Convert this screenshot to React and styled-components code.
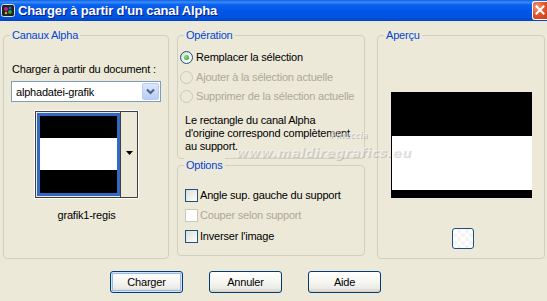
import React from "react";
import styled, { createGlobalStyle } from "styled-components";

const Global = createGlobalStyle`
  html, body { margin: 0; padding: 0; background: #ECE9D8; }
  body { font-family: "Liberation Sans", Arial, sans-serif; font-size: 11px; color: #000; letter-spacing: -0.2px; }
  * { box-sizing: border-box; }
`;

const Window = styled.div`
  position: relative;
  width: 547px;
  height: 301px;
  background: #ECE9D8;
  overflow: hidden;
  display: flex;
  flex-direction: column;
`;

const TitleBar = styled.div`
  height: 21px;
  flex: none;
  display: flex;
  align-items: center;
  background: linear-gradient(to bottom, #0A5FEA 0%, #3D8DF5 10%, #0B63F0 22%, #0056E6 50%, #0053E0 80%, #0046C8 100%);
  color: #fff;
  padding-left: 1px;
`;

const TitleText = styled.span`
  font-family: "Liberation Sans", Arial, sans-serif;
  font-weight: bold;
  font-size: 13px;
  margin-left: 2px;
  text-shadow: 1px 1px 0 #0A1E8A;
  letter-spacing: -0.15px;
  flex: 1;
`;

const CloseBtn = styled.div`
  width: 15px;
  height: 19px;
  margin-top: -1px;
  background: radial-gradient(circle at 30% 30%, #F0A080 0%, #E2582E 45%, #C8401E 100%);
  border: 1px solid #fff;
  border-right: none;
  border-radius: 3px 0 0 3px;
  display: flex;
  align-items: center;
  justify-content: center;
`;

const Body = styled.div`
  flex: 1;
  display: flex;
  flex-direction: column;
  padding: 14px 0 0 3px;
`;

const Panels = styled.div`
  display: flex;
  align-items: flex-start;
`;

const Column = styled.div`
  display: flex;
  flex-direction: column;
  gap: 6px;
  margin-left: ${(p) => p.$ml || 0}px;
`;

const Group = styled.div`
  position: relative;
  width: ${(p) => p.$w}px;
  height: ${(p) => p.$h}px;
  border: 1px solid #D0D0BF;
  border-radius: 4px;
  margin-left: ${(p) => p.$ml || 0}px;
  display: flex;
  flex-direction: column;
  padding: ${(p) => p.$pad || "0"};
`;

const Legend = styled.span`
  position: absolute;
  top: -8px;
  left: 6px;
  padding: 0 2px;
  background: #ECE9D8;
  color: #0046D5;
  font-size: 11px;
  line-height: 14px;
`;

const Label = styled.div`
  line-height: 13px;
  white-space: nowrap;
  color: ${(p) => (p.$disabled ? "#ACA899" : "#000")};
`;

const Select = styled.div`
  width: 150px;
  height: 21px;
  margin: 5px 0 0 -1px;
  border: 1px solid #7F9DB9;
  background: #fff;
  display: flex;
  align-items: center;
  padding-left: 4px;
`;

const SelectText = styled.span`
  flex: 1;
`;

const SelectBtn = styled.div`
  width: 17px;
  height: 17px;
  margin-right: 1px;
  border-radius: 2px;
  background: linear-gradient(to bottom, #DCE7FD, #B9CDF8);
  border: 1px solid #B8CBF4;
  display: flex;
  align-items: center;
  justify-content: center;
`;

const Picker = styled.div`
  align-self: center;
  margin: 9px 7px 0 0;
  width: 103px;
  height: 87px;
  border: 1px solid #404040;
  box-shadow: 0 0 0 1px #fff;
  display: flex;
  background: #ECE9D8;
`;

const Thumb = styled.div`
  width: 83px;
  margin: 1px 0 1px 1px;
  border: 3px solid #316AC5;
  display: flex;
  flex-direction: column;
`;

const Band = styled.div`
  height: ${(p) => p.$h}px;
  background: ${(p) => p.$c};
  flex: ${(p) => (p.$grow ? 1 : "none")};
`;

const PickArrow = styled.div`
  flex: 1;
  border-left: 1px solid #404040;
  display: flex;
  align-items: center;
  justify-content: center;
  padding-bottom: 4px;
`;

const Caption = styled.div`
  align-self: center;
  margin: 11px 7px 0 0;
  line-height: 13px;
`;

const RadioRow = styled.div`
  display: flex;
  align-items: center;
  height: 19.5px;
  gap: 3px;
`;

const Radio = styled.span`
  width: 13px;
  height: 13px;
  border-radius: 50%;
  border: 1px solid ${(p) => (p.$disabled ? "#CAC8BB" : "#1C5180")};
  background: ${(p) => (p.$disabled ? "#ECE9D8" : "linear-gradient(135deg, #DCDCD7, #fff)")};
  display: flex;
  align-items: center;
  justify-content: center;
  flex: none;
`;

const Dot = styled.span`
  width: 5px;
  height: 5px;
  border-radius: 50%;
  background: radial-gradient(circle at 35% 35%, #8BE08B, #21A121);
`;

const Para = styled.div`
  margin: 7px 0 0 5px;
  line-height: 13px;
`;

const CheckRow = styled.div`
  display: flex;
  align-items: center;
  height: 20.5px;
  gap: 2px;
`;

const Check = styled.span`
  width: 13px;
  height: 13px;
  border: 1px solid ${(p) => (p.$disabled ? "#CAC8BB" : "#1C5180")};
  background: ${(p) => (p.$disabled ? "#fff" : "linear-gradient(135deg, #DCDCD7, #fff)")};
  flex: none;
`;

const Preview = styled.div`
  align-self: center;
  margin: 56px 0 0 1px;
  width: 141px;
  height: 106px;
  display: flex;
  flex-direction: column;
  background: #000;
`;

const PreviewWhite = styled.div`
  height: 54px;
  margin-top: 44px;
  margin-left: 1px;
  background: #fff;
`;

const SmallBtn = styled.div`
  align-self: center;
  margin: 30px 0 0 3px;
  width: 22px;
  height: 21px;
  border: 1px solid #1C4F86;
  border-radius: 3px;
  background: repeating-conic-gradient(#F4F4F2 0% 25%, #FFFFFF 0% 50%) 0 0 / 8px 8px;
`;

const ButtonRow = styled.div`
  display: flex;
  gap: 26px;
  padding-left: 107px;
  margin-top: 12px;
`;

const Button = styled.div`
  width: 73px;
  height: 22px;
  border: 1px solid #003C74;
  border-radius: 3px;
  background: linear-gradient(to bottom, #FFFFFF 0%, #F5F5F1 50%, #ECEBE6 80%, #D6D0C5 100%);
  display: flex;
  align-items: center;
  justify-content: center;
  box-shadow: ${(p) => (p.$default ? "inset 0 0 0 1px #CEE7FF, inset 0 0 0 2px #98B8EA" : "none")};
  font-size: 11px;
`;

const Watermark = styled.div`
  position: absolute;
  left: ${(p) => p.$x}px;
  top: ${(p) => p.$y}px;
  font-family: "DejaVu Sans", sans-serif;
  font-weight: bold;
  font-style: italic;
  font-size: ${(p) => p.$s}px;
  color: rgba(250, 250, 248, 0.5);
  text-shadow: 1px 1px 0 rgba(110, 110, 110, 0.3);
  letter-spacing: ${(p) => p.$ls || 0}px;
  pointer-events: none;
  white-space: nowrap;
`;

const AppIcon = () => (
  <svg width="15" height="15" viewBox="0 0 15 15">
    <rect x="0.5" y="1.5" width="13" height="12" rx="2" fill="#222" stroke="#ddd" />
    <circle cx="5" cy="6" r="2" fill="#C02090" />
    <circle cx="9" cy="9" r="2" fill="#20A040" />
    <circle cx="9" cy="5" r="1.5" fill="#2060D0" />
    <circle cx="5" cy="10" r="1.2" fill="#E0C020" />
  </svg>
);

export default function App() {
  return (
    <>
      <Global />
      <Window>
        <TitleBar>
          <AppIcon />
          <TitleText>Charger à partir d'un canal Alpha</TitleText>
          <CloseBtn>
            <svg width="10" height="10" viewBox="0 0 10 10">
              <path d="M1.5 1.5 L8.5 8.5 M8.5 1.5 L1.5 8.5" stroke="#fff" strokeWidth="2" strokeLinecap="square" />
            </svg>
          </CloseBtn>
        </TitleBar>
        <Body>
          <Panels>
            <Group $w={166} $h={224} $pad="27px 0 0 8px">
              <Legend>Canaux Alpha</Legend>
              <Label>Charger à partir du document :</Label>
              <Select>
                <SelectText>alphadatei-grafik</SelectText>
                <SelectBtn>
                  <svg width="9" height="7" viewBox="0 0 9 7">
                    <path d="M1 1.5 L4.5 5 L8 1.5" fill="none" stroke="#4D6185" strokeWidth="2" />
                  </svg>
                </SelectBtn>
              </Select>
              <Picker>
                <Thumb>
                  <Band $c="#000" $h={22} />
                  <Band $c="#fff" $h={32} />
                  <Band $c="#000" $grow />
                </Thumb>
                <PickArrow>
                  <svg width="7" height="4" viewBox="0 0 7 4">
                    <path d="M0 0 H7 L3.5 4 Z" fill="#000" />
                  </svg>
                </PickArrow>
              </Picker>
              <Caption>grafik1-regis</Caption>
            </Group>
            <Column $ml={8}>
              <Group $w={188} $h={124} $pad="12px 0 0 2px">
                <Legend>Opération</Legend>
                <RadioRow>
                  <Radio><Dot /></Radio>
                  <Label>Remplacer la sélection</Label>
                </RadioRow>
                <RadioRow>
                  <Radio $disabled />
                  <Label $disabled>Ajouter à la sélection actuelle</Label>
                </RadioRow>
                <RadioRow>
                  <Radio $disabled />
                  <Label $disabled>Supprimer de la sélection actuelle</Label>
                </RadioRow>
                <Para>
                  Le rectangle du canal Alpha
                  <br />
                  d'origine correspond complètement
                  <br />
                  au support.
                </Para>
              </Group>
              <Group $w={188} $h={91} $pad="19px 0 0 7px">
                <Legend>Options</Legend>
                <CheckRow>
                  <Check />
                  <Label>Angle sup. gauche du support</Label>
                </CheckRow>
                <CheckRow>
                  <Check $disabled />
                  <Label $disabled>Couper selon support</Label>
                </CheckRow>
                <CheckRow>
                  <Check />
                  <Label>Inverser l'image</Label>
                </CheckRow>
              </Group>
            </Column>
            <Group $w={168} $h={224} $ml={12}>
              <Legend>Aperçu</Legend>
              <Preview>
                <PreviewWhite />
              </Preview>
              <SmallBtn />
            </Group>
          </Panels>
          <ButtonRow>
            <Button $default>Charger</Button>
            <Button>Annuler</Button>
            <Button>Aide</Button>
          </ButtonRow>
        </Body>
        <Watermark $x={330} $y={131} $s={8}>Pinuccia</Watermark>
        <Watermark $x={236} $y={145} $s={13} $ls={0.3}>www.maldiregrafics.eu</Watermark>
      </Window>
    </>
  );
}
